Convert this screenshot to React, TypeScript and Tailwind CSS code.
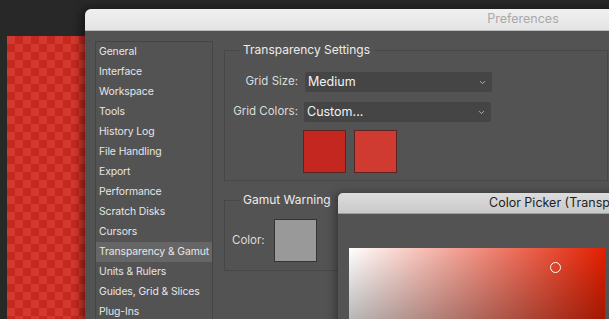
import { ChevronDown } from 'lucide-react'

const sections = [
  'General',
  'Interface',
  'Workspace',
  'Tools',
  'History Log',
  'File Handling',
  'Export',
  'Performance',
  'Scratch Disks',
  'Cursors',
  'Transparency & Gamut',
  'Units & Rulers',
  'Guides, Grid & Slices',
  'Plug-Ins',
]

function Select({ value }: { value: string }) {
  return (
    <div className="flex h-[20px] w-[187px] items-center justify-between rounded-[2px] bg-[#454545] pl-[3px] pr-[5px] text-[12.5px] text-[#f2f2f2]">
      <span>{value}</span>
      <ChevronDown size={9} strokeWidth={2} className="text-[#d0d0d0]" />
    </div>
  )
}

export default function App() {
  return (
    <div className="relative h-[319px] w-[609px] overflow-hidden bg-[#282828] font-['Inter',sans-serif]">
      {/* document canvas behind the dialogs */}
      <div className="absolute left-[7px] top-[36px] h-[300px] w-[90px] bg-[repeating-conic-gradient(#c5281f_0%_25%,#d4392f_0%_50%)] bg-[length:16px_16px]" />

      {/* Preferences window */}
      <div className="absolute left-[85px] top-[9px] flex h-[330px] w-[876px] flex-col overflow-hidden rounded-tl-[6px] bg-[#535353] shadow-[-4px_0_10px_rgba(0,0,0,0.45)]">
        <div className="flex h-[22px] shrink-0 items-center justify-center border-b border-[#bdbdbd] bg-[linear-gradient(#f0f0f0,#e4e4e4)] text-[12.5px] text-[#a9a9a9]">
          Preferences
        </div>
        <div className="flex flex-1 gap-[11px] pl-[10px] pt-[10px]">
          <ul className="w-[118px] shrink-0 border border-[#454545] text-[10.4px] tracking-[-0.1px] text-[#e6e6e6]">
            {sections.map((s) => (
              <li
                key={s}
                className={`flex h-[20px] items-center pl-[3px] whitespace-nowrap ${s === 'Transparency & Gamut' ? 'bg-[#666666]' : ''}`}
              >
                {s}
              </li>
            ))}
          </ul>

          <div className="flex w-[384px] flex-col gap-[10px]">
            <fieldset className="h-[140px] border border-[#474747] px-[14px]">
              <legend className="px-[4px] text-[12px] text-[#ececec]">Transparency Settings</legend>
              <div className="-ml-[7px] mt-[13px] flex flex-col text-[11.5px] text-[#dcdcdc]">
                <div className="flex items-center gap-[7px]">
                  <span className="w-[66px] text-right">Grid Size:</span>
                  <Select value="Medium" />
                </div>
                <div className="mt-[10px] flex items-center gap-[6px]">
                  <span className="w-[66px] text-right whitespace-nowrap">Grid Colors:</span>
                  <Select value="Custom..." />
                </div>
                <div className="ml-[71px] mt-[8px] flex gap-[8px]">
                  <div className="h-[43px] w-[43px] border border-[#5a2420] bg-[#c3271f]" />
                  <div className="h-[43px] w-[43px] border border-[#5a2420] bg-[#cf3a31]" />
                </div>
              </div>
            </fieldset>

            <fieldset className="h-[80px] border border-[#474747] px-[14px]">
              <legend className="px-[4px] text-[12px] text-[#ececec]">Gamut Warning</legend>
              <div className="-ml-[7px] mt-[10px] flex items-center gap-[9px] text-[11.5px] text-[#dcdcdc]">
                <span>Color:</span>
                <div className="h-[43px] w-[43px] border border-[#333333] bg-[#999999]" />
              </div>
            </fieldset>
          </div>
        </div>
      </div>

      {/* Color Picker window */}
      <div className="absolute left-[338px] top-[193px] flex h-[200px] w-[400px] flex-col overflow-hidden rounded-tl-[5px] bg-[#535353] shadow-[-3px_0_8px_rgba(0,0,0,0.35)]">
        <div className="flex h-[21px] shrink-0 items-center border-b border-[#9e9e9e] bg-[linear-gradient(#dcdcdc,#c9c9c9)] pl-[151px] text-[12.5px] whitespace-nowrap text-[#1f1f1f]">
          Color Picker (Transparency Grid Color)
        </div>
        <div className="pl-[11px] pt-[34px]">
          <div className="relative h-[256px] w-[256px] bg-[linear-gradient(to_right,#ffffff,#e31f00)]">
            <div className="absolute inset-0 bg-[linear-gradient(to_bottom,transparent,#000000)]" />
            <div className="absolute left-[201px] top-[14px] h-[11px] w-[11px] rounded-full border-[1.5px] border-white" />
          </div>
        </div>
      </div>
    </div>
  )
}
